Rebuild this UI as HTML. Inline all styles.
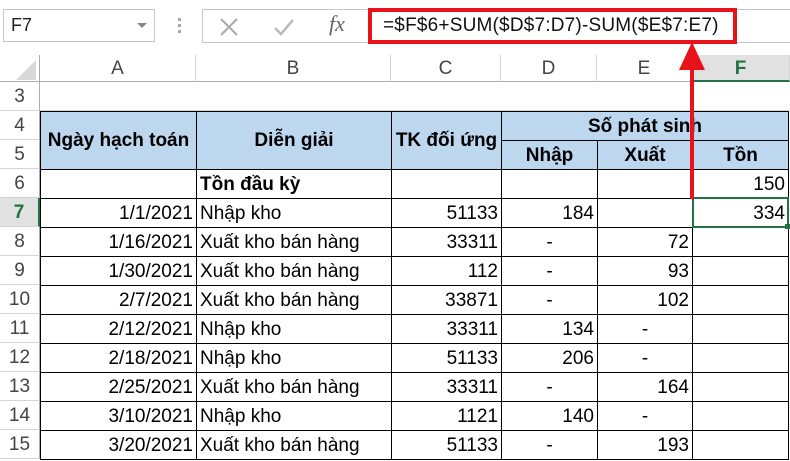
<!DOCTYPE html>
<html><head><meta charset="utf-8"><style>
body{margin:0;width:790px;height:461px;overflow:hidden;background:#fff;font-family:"Liberation Sans",sans-serif;position:relative}
.abs{position:absolute}
.namebox{left:3px;top:9px;width:152px;height:33px;border:1px solid #c6c6c6;box-sizing:border-box;font-size:18px;line-height:31px;padding-left:7px;color:#222}
.fbtn{left:202px;top:9px;width:166px;height:34px;border:1px solid #c6c6c6;border-right:none;box-sizing:border-box}
.red{left:368px;top:8px;width:369px;height:36px;border:4px solid #e8121b;box-sizing:border-box;font-size:19px;line-height:28px;padding-left:11px;color:#111;letter-spacing:0.2px}
.fline{left:368px;top:9px;width:422px;height:34px;border-top:1px solid #c6c6c6;border-bottom:1px solid #c6c6c6;box-sizing:border-box}
.hdr{top:55px;height:27px;font-size:19px;color:#444;text-align:center;line-height:28px;border-right:1px solid #d4d4d4;border-bottom:1px solid #ababab;box-sizing:border-box}
.rh{left:0;width:40px;height:29px;font-size:19px;color:#444;text-align:center;line-height:29px;border-bottom:1px solid #d4d4d4;border-right:1px solid #ababab;box-sizing:border-box}
table{position:absolute;left:40px;top:111px;border-collapse:collapse;table-layout:fixed;font-size:19px}
td{border:1px solid #000;height:28px;padding:0 3px;white-space:nowrap;overflow:hidden;line-height:27px}
.h td{background:#bdd7ee;font-weight:bold;text-align:center}
.r{text-align:right}.c{text-align:center}
</style></head><body>
<div class="abs namebox">F7</div>
<div class="abs" style="left:137px;top:23px;width:0;height:0;border-left:5px solid transparent;border-right:5px solid transparent;border-top:5px solid #888"></div>
<div class="abs" style="left:178px;top:18px;width:3px;height:3px;background:#aaa;box-shadow:0 6px #aaa,0 12px #aaa"></div>
<div class="abs fline"></div>
<div class="abs fbtn"></div>
<svg class="abs" style="left:218px;top:16px" width="22" height="22"><path d="M3 3L19 19M19 3L3 19" stroke="#aaa" stroke-width="2"/></svg>
<svg class="abs" style="left:272px;top:16px" width="24" height="22"><path d="M3 12L9 18L21 4" stroke="#bbb" stroke-width="2.5" fill="none"/></svg>
<div class="abs" style="left:329px;top:11px;font-family:'Liberation Serif',serif;font-style:italic;font-size:22px;color:#666">fx</div>
<div class="abs red">=$F$6+SUM($D$7:D7)-SUM($E$7:E7)</div>

<div class="abs" style="left:0;top:55px;width:40px;height:27px;border-right:1px solid #ababab;border-bottom:1px solid #ababab;box-sizing:border-box"></div>
<div class="abs" style="left:16px;top:60px;width:0;height:0;border-left:20px solid transparent;border-bottom:20px solid #d9d9d9"></div>
<div class="abs hdr" style="left:40px;width:156px">A</div>
<div class="abs hdr" style="left:196px;width:195px">B</div>
<div class="abs hdr" style="left:391px;width:110px">C</div>
<div class="abs hdr" style="left:501px;width:96px">D</div>
<div class="abs hdr" style="left:597px;width:95px">E</div>
<div class="abs hdr" style="left:692px;width:98px;background:#e1e1e1;color:#217346;font-weight:bold;border-bottom:2px solid #217346">F</div>

<div class="abs rh" style="top:82px">3</div>
<div class="abs rh" style="top:111px">4</div>
<div class="abs rh" style="top:140px">5</div>
<div class="abs rh" style="top:169px">6</div>
<div class="abs rh" style="top:198px;background:#e1e1e1;color:#217346;font-weight:bold;border-right:2px solid #217346">7</div>
<div class="abs rh" style="top:227px">8</div>
<div class="abs rh" style="top:256px">9</div>
<div class="abs rh" style="top:285px">10</div>
<div class="abs rh" style="top:314px">11</div>
<div class="abs rh" style="top:343px">12</div>
<div class="abs rh" style="top:372px">13</div>
<div class="abs rh" style="top:401px">14</div>
<div class="abs rh" style="top:430px">15</div>
<div class="abs" style="left:40px;top:110px;width:750px;height:1px;background:#d4d4d4"></div>

<table>
<colgroup><col style="width:156px"><col style="width:195px"><col style="width:110px"><col style="width:96px"><col style="width:95px"><col style="width:96px"></colgroup>
<tr class="h"><td rowspan="2">Ngày hạch toán</td><td rowspan="2">Diễn giải</td><td rowspan="2">TK đối ứng</td><td colspan="3">Số phát sinh</td></tr>
<tr class="h"><td>Nhập</td><td>Xuất</td><td>Tồn</td></tr>
<tr><td></td><td style="font-weight:bold">Tồn đầu kỳ</td><td></td><td></td><td></td><td class="r">150</td></tr>
<tr><td class="r">1/1/2021</td><td>Nhập kho</td><td class="r">51133</td><td class="r">184</td><td></td><td class="r">334</td></tr>
<tr><td class="r">1/16/2021</td><td>Xuất kho bán hàng</td><td class="r">33311</td><td class="c">-</td><td class="r">72</td><td></td></tr>
<tr><td class="r">1/30/2021</td><td>Xuất kho bán hàng</td><td class="r">112</td><td class="c">-</td><td class="r">93</td><td></td></tr>
<tr><td class="r">2/7/2021</td><td>Xuất kho bán hàng</td><td class="r">33871</td><td class="c">-</td><td class="r">102</td><td></td></tr>
<tr><td class="r">2/12/2021</td><td>Nhập kho</td><td class="r">33311</td><td class="r">134</td><td class="c">-</td><td></td></tr>
<tr><td class="r">2/18/2021</td><td>Nhập kho</td><td class="r">51133</td><td class="r">206</td><td class="c">-</td><td></td></tr>
<tr><td class="r">2/25/2021</td><td>Xuất kho bán hàng</td><td class="r">33311</td><td class="c">-</td><td class="r">164</td><td></td></tr>
<tr><td class="r">3/10/2021</td><td>Nhập kho</td><td class="r">1121</td><td class="r">140</td><td class="c">-</td><td></td></tr>
<tr><td class="r">3/20/2021</td><td>Xuất kho bán hàng</td><td class="r">51133</td><td class="c">-</td><td class="r">193</td><td></td></tr>
</table>

<div class="abs" style="left:692px;top:197px;width:97px;height:31px;border:2px solid #217346;box-sizing:border-box"></div>
<div class="abs" style="left:785px;top:224px;width:5px;height:5px;background:#217346"></div>

<div class="abs" style="left:690px;top:66px;width:4px;height:133px;background:#e8121b"></div>
<div class="abs" style="left:679px;top:42px;width:0;height:0;border-left:13px solid transparent;border-right:13px solid transparent;border-bottom:28px solid #e8121b"></div>
</body></html>
